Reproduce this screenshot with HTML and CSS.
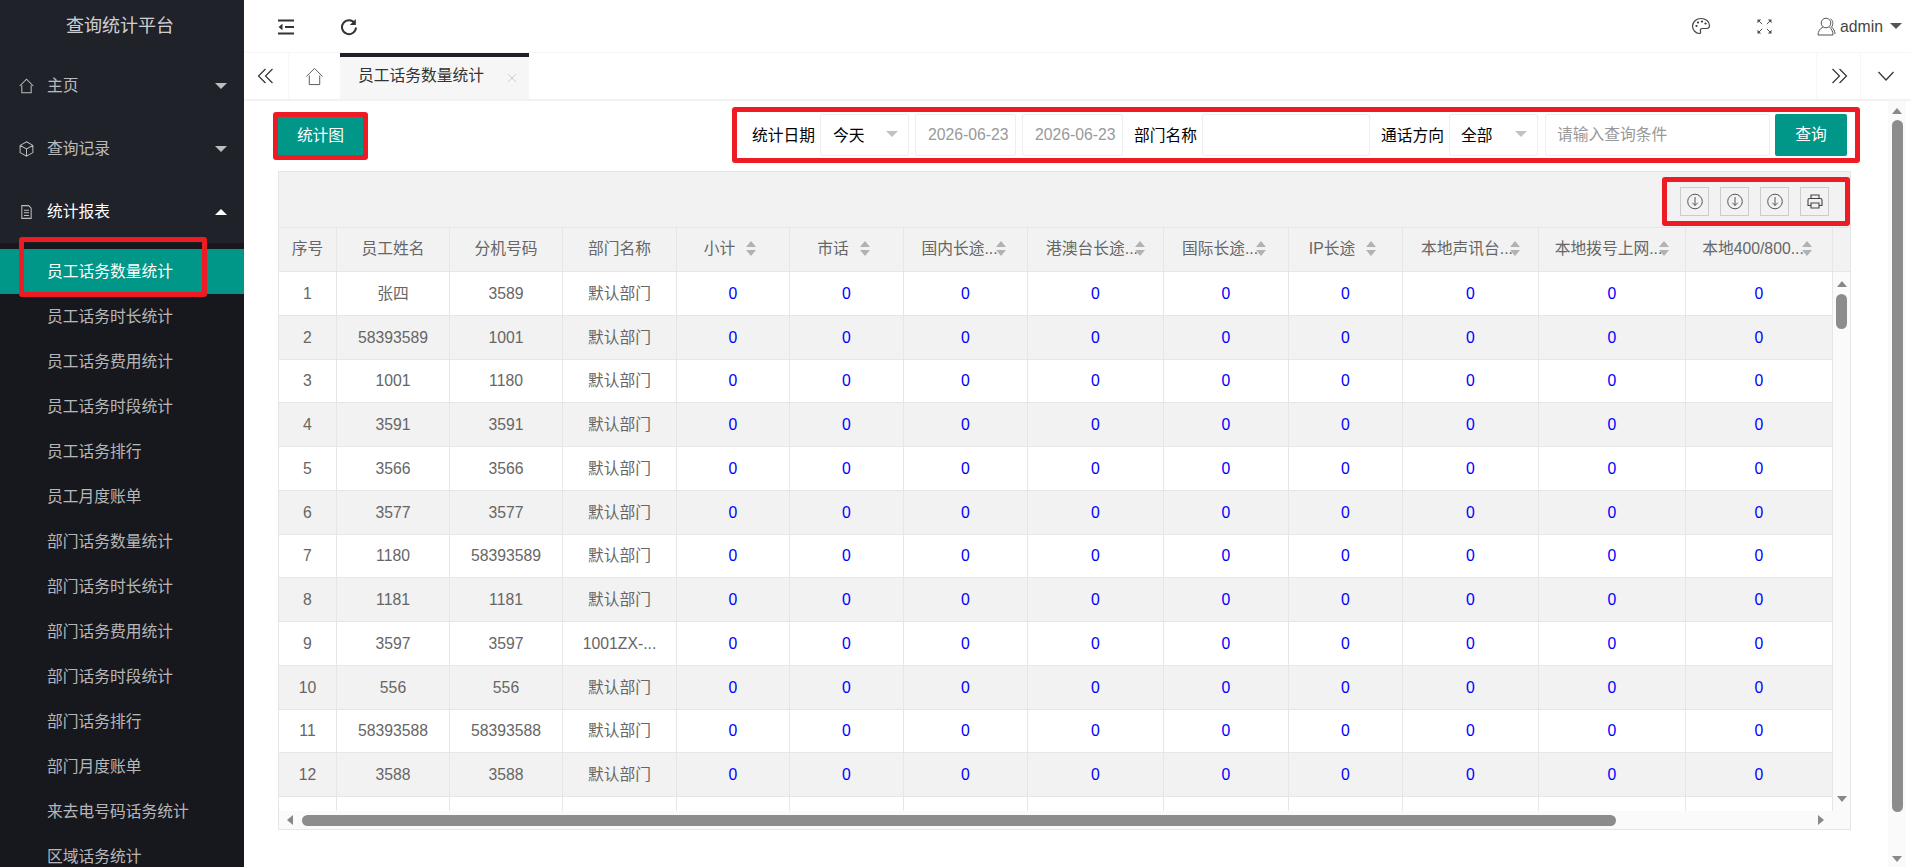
FILE: index.html
```html
<!DOCTYPE html>
<html lang="zh-CN">
<head>
<meta charset="utf-8">
<title>查询统计平台</title>
<link rel="stylesheet" href="styles.css">
</head>
<body>
<div class="app">
  <aside class="side">
    <div class="logo">查询统计平台</div>
    <nav>
      <a class="nav-item"><svg class="nav-ico" viewBox="0 0 20 20"><path d="M2 10 10 2l8 8M4.500 9v9h11V9"/></svg><span>主页</span><i class="tri down"></i></a>
      <a class="nav-item"><svg class="nav-ico" viewBox="0 0 20 20"><path d="M10 1.500 17.500 5.800v8.400L10 18.500 2.500 14.200V5.800zM2.500 5.800 10 10l7.500-4.200M10 10v8.500"/></svg><span>查询记录</span><i class="tri down"></i></a>
      <a class="nav-item open"><svg class="nav-ico" viewBox="0 0 20 20"><path d="M4.500 2.500h8l3 3v12h-11zM7 8h6M7 11h6M7 14h6"/></svg><span>统计报表</span><i class="tri up"></i></a>
      <div class="sub">
        <a class="sub-item active">员工话务数量统计<b class="mark"></b></a>
        <a class="sub-item">员工话务时长统计</a>
        <a class="sub-item">员工话务费用统计</a>
        <a class="sub-item">员工话务时段统计</a>
        <a class="sub-item">员工话务排行</a>
        <a class="sub-item">员工月度账单</a>
        <a class="sub-item">部门话务数量统计</a>
        <a class="sub-item">部门话务时长统计</a>
        <a class="sub-item">部门话务费用统计</a>
        <a class="sub-item">部门话务时段统计</a>
        <a class="sub-item">部门话务排行</a>
        <a class="sub-item">部门月度账单</a>
        <a class="sub-item">来去电号码话务统计</a>
        <a class="sub-item">区域话务统计</a>
      </div>
    </nav>
  </aside>
  <main class="main">
    <header class="top">
      <svg class="top-ico menu" viewBox="0 0 18 18"><path d="M1 2.500h16M8 9h9M1 15.500h16"/><path class="solid" d="M5.500 5.800 1.500 9l4 3.200z"/></svg>
      <svg class="top-ico refresh" viewBox="0 0 18 18"><path d="M14.800 5.200A7 7 0 1 0 16 9.500"/><path class="solid" d="M15.800 1v6h-6z"/></svg>
      <div class="top-right">
        <svg class="thin palette" viewBox="0 0 20 20"><path d="M10 2.500C5.300 2.500 1.500 5.900 1.500 10c0 4 3.400 7.500 6.500 7.500 1.500 0 2-1 1.500-2.200-.6-1.500.3-2.800 1.800-2.800h4c1.800 0 3.200-1 3.200-3C18.500 5.500 14.700 2.500 10 2.500z"/><circle class="solid" cx="5.500" cy="10" r="1.100"/><circle class="solid" cx="7" cy="6.500" r="1.100"/><circle class="solid" cx="11" cy="5.500" r="1.100"/><circle class="solid" cx="14.500" cy="7.500" r="1.100"/></svg>
        <svg class="thin full" viewBox="0 0 16 16"><path d="M1 1l4.500 4.500M15 1l-4.500 4.500M1 15l4.500-4.500M15 15l-4.500-4.500"/><path class="solid" d="M.5.500h4l-4 4zM15.500.500v4l-4-4zM.5 15.500v-4l4 4zM15.500 15.500h-4l4-4z"/></svg>
        <div class="user">
          <svg class="thin user-ico" viewBox="0 0 20 20"><circle cx="9" cy="6.500" r="4.800"/><path d="M6 10.500C3 12 1 15 1 18.500h15c0-3.500-1.500-6-3.500-8M13.500 2.500c2.500 1 3.200 5.500 1 8 1.800 1.500 3.500 4 3.500 7"/></svg>
          <span>admin</span><i class="tri caret"></i>
        </div>
      </div>
    </header>
    <div class="tabs">
      <button class="tab-btn left"><svg class="thin" viewBox="0 0 18 18"><path d="M8.500 2 1.500 9l7 7M15.500 2l-7 7 7 7"/></svg></button>
      <button class="tab-btn home"><svg class="thin" viewBox="0 0 20 20"><path d="M1.500 10 10 1.500l8.500 8.500M4.500 9v9.500h11V9"/></svg></button>
      <div class="tab-on"><span>员工话务数量统计</span><svg class="tab-x" viewBox="0 0 10 10"><path d="M1 1l8 8M9 1 1 9"/></svg></div>
      <div class="tab-fill"></div>
      <button class="tab-btn right"><svg class="thin" viewBox="0 0 18 18"><path d="M2.500 2l7 7-7 7M9.500 2l7 7-7 7"/></svg></button>
      <button class="tab-btn more"><svg class="thin" viewBox="0 0 18 18"><path d="M1.500 5 9 13l7.500-8"/></svg></button>
    </div>
    <div class="page">
      <div class="content">
        <div class="bar">
          <button class="chart-btn">统计图</button>
          <form class="search">
            <label class="lbl first">统计日期</label>
            <div class="sel today"><span>今天</span><i class="tri sel-tri"></i></div>
            <div class="date">2026-06-23</div>
            <div class="date">2026-06-23</div>
            <label class="lbl">部门名称</label>
            <div class="field dept"></div>
            <label class="lbl">通话方向</label>
            <div class="sel all"><span>全部</span><i class="tri sel-tri"></i></div>
            <div class="field query">请输入查询条件</div>
            <button class="go" type="button">查询</button>
          </form>
        </div>
        <section class="grid">
          <div class="tools">
            <div class="tool-box">
              <button class="tool"><svg viewBox="0 0 16 16"><circle cx="8" cy="8" r="7.300"/><path d="M8 3.500v8.500M5.300 9.300 8 12l2.700-2.700"/></svg></button>
              <button class="tool"><svg viewBox="0 0 16 16"><circle cx="8" cy="8" r="7.300"/><path d="M8 3.500v8.500M5.300 9.300 8 12l2.700-2.700"/></svg></button>
              <button class="tool"><svg viewBox="0 0 16 16"><circle cx="8" cy="8" r="7.300"/><path d="M8 3.500v8.500M5.300 9.300 8 12l2.700-2.700"/></svg></button>
              <button class="tool"><svg class="printer" viewBox="0 0 16 16"><path d="M4 5V1.500h8V5M4 12H1V6.500Q1 5 2.500 5h11Q15 5 15 6.500V12h-3M4 9.500h8v5H4z"/></svg></button>
            </div>
          </div>
          <div class="row head">
            <div class="c">序号</div><div class="c">员工姓名</div><div class="c">分机号码</div><div class="c">部门名称</div>
            <div class="c">小计<i class="sort"></i></div>
            <div class="c">市话<i class="sort"></i></div>
            <div class="c">国内长途...<i class="sort tight"></i></div>
            <div class="c">港澳台长途...<i class="sort tight wide"></i></div>
            <div class="c">国际长途...<i class="sort tight"></i></div>
            <div class="c">IP长途<i class="sort"></i></div>
            <div class="c">本地声讯台...<i class="sort tight wide"></i></div>
            <div class="c">本地拨号上网...<i class="sort tight wide"></i></div>
            <div class="c">本地400/800...<i class="sort tight"></i></div>
          </div>
          <div class="body">
            <div class="rows">
              <div class="row"><div class="c">1</div><div class="c">张四</div><div class="c">3589</div><div class="c">默认部门</div><div class="c n">0</div><div class="c n">0</div><div class="c n">0</div><div class="c n">0</div><div class="c n">0</div><div class="c n">0</div><div class="c n">0</div><div class="c n">0</div><div class="c n">0</div></div>
              <div class="row"><div class="c">2</div><div class="c">58393589</div><div class="c">1001</div><div class="c">默认部门</div><div class="c n">0</div><div class="c n">0</div><div class="c n">0</div><div class="c n">0</div><div class="c n">0</div><div class="c n">0</div><div class="c n">0</div><div class="c n">0</div><div class="c n">0</div></div>
              <div class="row"><div class="c">3</div><div class="c">1001</div><div class="c">1180</div><div class="c">默认部门</div><div class="c n">0</div><div class="c n">0</div><div class="c n">0</div><div class="c n">0</div><div class="c n">0</div><div class="c n">0</div><div class="c n">0</div><div class="c n">0</div><div class="c n">0</div></div>
              <div class="row"><div class="c">4</div><div class="c">3591</div><div class="c">3591</div><div class="c">默认部门</div><div class="c n">0</div><div class="c n">0</div><div class="c n">0</div><div class="c n">0</div><div class="c n">0</div><div class="c n">0</div><div class="c n">0</div><div class="c n">0</div><div class="c n">0</div></div>
              <div class="row"><div class="c">5</div><div class="c">3566</div><div class="c">3566</div><div class="c">默认部门</div><div class="c n">0</div><div class="c n">0</div><div class="c n">0</div><div class="c n">0</div><div class="c n">0</div><div class="c n">0</div><div class="c n">0</div><div class="c n">0</div><div class="c n">0</div></div>
              <div class="row"><div class="c">6</div><div class="c">3577</div><div class="c">3577</div><div class="c">默认部门</div><div class="c n">0</div><div class="c n">0</div><div class="c n">0</div><div class="c n">0</div><div class="c n">0</div><div class="c n">0</div><div class="c n">0</div><div class="c n">0</div><div class="c n">0</div></div>
              <div class="row"><div class="c">7</div><div class="c">1180</div><div class="c">58393589</div><div class="c">默认部门</div><div class="c n">0</div><div class="c n">0</div><div class="c n">0</div><div class="c n">0</div><div class="c n">0</div><div class="c n">0</div><div class="c n">0</div><div class="c n">0</div><div class="c n">0</div></div>
              <div class="row"><div class="c">8</div><div class="c">1181</div><div class="c">1181</div><div class="c">默认部门</div><div class="c n">0</div><div class="c n">0</div><div class="c n">0</div><div class="c n">0</div><div class="c n">0</div><div class="c n">0</div><div class="c n">0</div><div class="c n">0</div><div class="c n">0</div></div>
              <div class="row"><div class="c">9</div><div class="c">3597</div><div class="c">3597</div><div class="c">1001ZX-...</div><div class="c n">0</div><div class="c n">0</div><div class="c n">0</div><div class="c n">0</div><div class="c n">0</div><div class="c n">0</div><div class="c n">0</div><div class="c n">0</div><div class="c n">0</div></div>
              <div class="row"><div class="c">10</div><div class="c">556</div><div class="c">556</div><div class="c">默认部门</div><div class="c n">0</div><div class="c n">0</div><div class="c n">0</div><div class="c n">0</div><div class="c n">0</div><div class="c n">0</div><div class="c n">0</div><div class="c n">0</div><div class="c n">0</div></div>
              <div class="row"><div class="c">11</div><div class="c">58393588</div><div class="c">58393588</div><div class="c">默认部门</div><div class="c n">0</div><div class="c n">0</div><div class="c n">0</div><div class="c n">0</div><div class="c n">0</div><div class="c n">0</div><div class="c n">0</div><div class="c n">0</div><div class="c n">0</div></div>
              <div class="row"><div class="c">12</div><div class="c">3588</div><div class="c">3588</div><div class="c">默认部门</div><div class="c n">0</div><div class="c n">0</div><div class="c n">0</div><div class="c n">0</div><div class="c n">0</div><div class="c n">0</div><div class="c n">0</div><div class="c n">0</div><div class="c n">0</div></div>
              <div class="row"><div class="c"></div><div class="c"></div><div class="c"></div><div class="c"></div><div class="c"></div><div class="c"></div><div class="c"></div><div class="c"></div><div class="c"></div><div class="c"></div><div class="c"></div><div class="c"></div><div class="c"></div></div>
            </div>
            <div class="vbar">
              <i class="arr a-up"></i>
              <b class="v-thumb"></b>
              <i class="arr a-down"></i>
            </div>
          </div>
          <div class="hbar">
            <i class="arr a-left"></i>
            <b class="h-thumb"></b>
            <i class="arr a-right"></i>
          </div>
        </section>
      </div>
      <div class="pagebar">
        <i class="arr a-up"></i>
        <b class="p-thumb"></b>
        <i class="arr a-down"></i>
      </div>
    </div>
  </main>
</div>
</body>
</html>
```
FILE: styles.css
```css
* { box-sizing: border-box; }
html, body { margin: 0; height: 100%; overflow: hidden; background: #fff; }
body { font: 15.75px/1.4 "Liberation Sans", "Noto Sans CJK SC", sans-serif; color: #666; }
i, b { display: block; font-style: normal; }
button { font: inherit; border: 0; padding: 0; background: none; }

.app { display: flex; height: 867px; }

/* sidebar */
.side { width: 244px; flex: none; background: #20222a; overflow: hidden; color: rgba(255,255,255,.7); }
.logo { height: 54px; display: flex; align-items: center; justify-content: center; padding-right: 4px; font-size: 18px; color: rgba(255,255,255,.8); box-shadow: 0 1px 2px rgba(0,0,0,.05); }
.nav-item { height: 63px; display: flex; align-items: center; padding-left: 18px; }
.nav-item span { margin-left: 20px; flex: 1; padding-top: 2px; }
.nav-item.open { color: #fff; }
.nav-ico { width: 17px; height: 18px; fill: none; stroke: rgba(255,255,255,.7); stroke-width: 1.2; }
.nav-item .nav-ico { margin-right: -8px; }
.nav-item .tri { margin-right: 17px; }
.tri { width: 0; height: 0; border-style: solid; border-color: transparent; }
.tri.down { border-width: 6px 6px 0; border-top-color: rgba(255,255,255,.7); }
.tri.up { border-width: 0 6px 6px; border-bottom-color: #fff; }
.sub { background: #16181d; padding-top: 6px; }
.sub-item { display: flex; align-items: center; height: 45px; padding: 2px 0 0 47px; position: relative; }
.sub-item.active { background: #009688; color: #fff; padding-top: 1px; }
.mark { position: absolute; left: 19px; top: -12px; width: 188px; height: 60px; border: 5px solid #ed1c24; border-radius: 3px; }

/* top header */
.main { flex: 1; min-width: 0; display: flex; flex-direction: column; }
.top { height: 53px; flex: none; display: flex; align-items: center; padding: 1px 0 0 33px; border-bottom: 1px solid #f6f6f6; }
.top-ico { width: 18px; height: 18px; fill: none; stroke: #333; stroke-width: 2; }
.top-ico.refresh { margin-left: 45px; }
.solid { fill: #333; stroke: none; }
.thin { fill: none; stroke: #444; stroke-width: 1; }
.top-right { margin-left: auto; display: flex; align-items: center; color: #444; }
.palette { width: 20px; height: 20px; stroke-width: 1.200; }
.full { width: 15px; height: 15px; margin-left: 46px; }
.full .solid { fill: #555; }
.user { display: flex; align-items: center; margin-left: 45px; padding-right: 9px; }
.user span { padding-top: 2px; }
.user-ico { width: 20px; height: 21px; margin-right: 3px; stroke: #555; }
.tri.caret { margin-left: 7px; border-width: 6px 6px 0; border-top-color: #555; }

/* tabs */
.tabs { height: 48px; flex: none; display: flex; border-bottom: 2px solid #f2f2f2; }
.tab-btn { display: flex; align-items: center; justify-content: center; border-right: 1px solid #f6f6f6; }
.tab-btn svg { width: 18px; height: 18px; stroke: #333; stroke-width: 1.200; }
.tab-btn.left { width: 45px; }
.tab-btn.home { width: 51px; border-right: 0; }
.tab-btn.home svg { width: 19px; height: 19px; stroke: #555; stroke-width: 1; }
.tab-btn.right { width: 45px; border-left: 1px solid #f6f6f6; border-right: 1px solid #f6f6f6; }
.tab-btn.more { width: 50px; border: 0; }
.tab-on { width: 189px; background: #f6f6f6; border-top: 4px solid #20222a; display: flex; align-items: center; padding: 0 0 3px 18px; color: #333; }
.tab-x { width: 10px; height: 10px; margin-left: 23px; margin-top: 3px; fill: none; stroke: #ccc; stroke-width: 1; }
.tab-fill { flex: 1; }

/* page */
.page { flex: 1; display: flex; min-height: 0; }
.content { width: 1644px; flex: none; padding: 6px 0 0 29px; }
.bar { width: 1587px; height: 58px; display: flex; justify-content: space-between; align-items: flex-start; }
.chart-btn { width: 95px; height: 48px; margin-top: 5px; background: #009688; color: #fff; border: 5px solid #ed1c24; border-radius: 3px; }
.search { width: 1128px; height: 56px; border: 5px solid #ed1c24; border-radius: 3px; display: flex; align-items: center; color: #000; padding-left: 15px; }
.lbl { margin-right: 5px; margin-left: 11px; padding-top: 2px; white-space: nowrap; }
.lbl.first { margin-left: 0; margin-right: 5px; }
.sel, .date, .field { height: 42px; border: 1px solid #eee; border-radius: 2px; display: flex; align-items: center; background: #fff; }
.sel { width: 89px; padding-left: 12px; justify-content: space-between; padding-right: 10px; }
.sel span { padding-top: 2px; }
.sel.all { padding-left: 11px; }
.sel-tri { border-width: 6px 6px 0; border-top-color: #c2c2c2; margin-top: -3px; }
.date { width: 101px; padding-left: 12px; margin-left: 6px; color: #999; }
.dept { width: 168px; }
.query { width: 225px; margin-left: 7px; padding-left: 11px; color: #999; }
.go { width: 72px; height: 42px; margin-left: 5px; background: #009688; color: #fff; border-radius: 2px; }

/* data grid */
.grid { width: 1573px; margin: 6px 0 0 5px; border: 1px solid #e6e6e6; background: #fafafa; }
.tools { height: 56px; background: #f2f2f2; display: flex; justify-content: flex-end; border-bottom: 1px solid #e6e6e6; }
.tool-box { width: 188px; height: 49px; margin-top: 5px; margin-right: 0; border: 5px solid #ed1c24; border-radius: 3px; display: flex; align-items: flex-start; padding: 5px 0 0 13px; gap: 11px; }
.tool { width: 29px; height: 29px; border: 1px solid #ccc; display: flex; align-items: center; justify-content: center; }
.tool svg { width: 16px; height: 17px; fill: none; stroke: #555; stroke-width: 1; }
.tool .printer { stroke: #444; stroke-width: 1.100; }
.row { display: grid; grid-template-columns: 58px 113px 113px 114px 113px 114px 124px 136px 125px 114px 136px 147px 147px; height: 43.75px; }
.rows .row { background: #fff; }
.rows .row:nth-child(even) { background: #f2f2f2; }
.c { display: flex; align-items: center; justify-content: center; border-right: 1px solid #e6e6e6; border-bottom: 1px solid #e6e6e6; white-space: nowrap; overflow: hidden; padding-top: 1px; }
.n { color: #00f; }
.row.head { height: 44px; background: #f2f2f2; border-bottom: 1px solid #e6e6e6; grid-template-columns: 58px 113px 113px 114px 113px 114px 124px 136px 125px 114px 136px 147px 147px 17px; }
.row.head .c { border-bottom: 0; padding-top: 0; }
.sort { width: 10px; height: 15px; margin: -3px 6px 0 11px; flex: none; position: relative; }
.sort::before, .sort::after { content: ""; position: absolute; left: 0; border-left: 5px solid transparent; border-right: 5px solid transparent; }
.sort::before { top: 0; border-bottom: 6px solid #b2b2b2; }
.sort::after { bottom: 0; border-top: 6px solid #b2b2b2; }
.sort.tight { margin-left: -2px; margin-right: 4px; }
.sort.tight.wide { margin-left: -3px; margin-right: 0; }
.body { display: flex; height: 539px; }
.rows { width: 1554px; flex: none; overflow: hidden; }
.arr { width: 0; height: 0; border-style: solid; border-color: transparent; flex: none; }
.a-up { border-width: 0 5px 6px; border-bottom-color: #888; }
.a-down { border-width: 6px 5px 0; border-top-color: #888; }
.a-left { border-width: 5px 6px 5px 0; border-right-color: #888; }
.a-right { border-width: 5px 0 5px 6px; border-left-color: #888; }
.vbar { flex: 1; display: flex; flex-direction: column; align-items: center; padding: 9px 0 9px; }
.v-thumb { width: 11px; height: 35px; margin-top: 7px; border-radius: 6px; background: #8c8c8c; }
.vbar .a-down { margin-top: auto; }
.hbar { height: 18px; display: flex; align-items: center; padding-left: 8px; padding-right: 26px; }
.h-thumb { width: 1314px; height: 11px; margin-left: 9px; border-radius: 6px; background: #8c8c8c; }
.hbar .a-right { margin-left: auto; }
.pagebar { width: 18px; flex: none; margin-right: 5px; background: #fafafa; display: flex; flex-direction: column; align-items: center; padding: 7px 0 5px; }
.p-thumb { width: 11px; flex: 1; margin: 6px 0 44px; border-radius: 6px; background: #8c8c8c; }
```
